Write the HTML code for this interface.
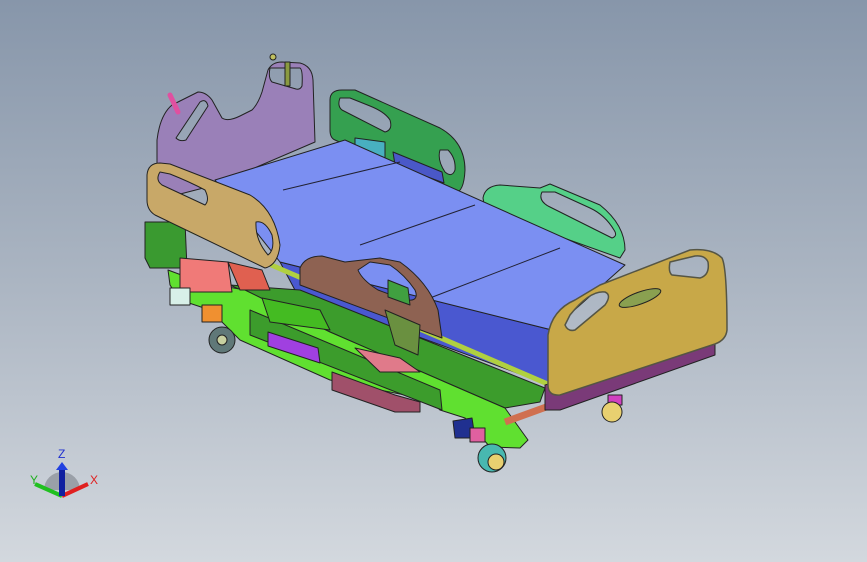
<!DOCTYPE html>
<html><head><meta charset="utf-8"><style>
html,body{margin:0;padding:0;width:867px;height:562px;overflow:hidden}
svg{display:block}
</style></head><body>
<svg width="867" height="562" viewBox="0 0 867 562" xmlns="http://www.w3.org/2000/svg" stroke="#222" stroke-width="1" stroke-linejoin="round">
<defs><linearGradient id="bg" x1="0" y1="0" x2="0" y2="1">
<stop offset="0" stop-color="#8796aa"/><stop offset="0.5" stop-color="#abb5c2"/><stop offset="1" stop-color="#d3d8de"/></linearGradient></defs>
<rect width="867" height="562" fill="url(#bg)" stroke="none"/>

<path fill-rule="evenodd" fill="#9a80b8" d="M157,200 L157,140 Q160,115 172,105 L198,92 Q206,92 212,100 L222,118 Q228,122 240,116 L252,110 Q258,104 262,92 L268,70 Q272,62 282,62 L300,63 Q312,66 313,80 L315,142 L215,185 Z
M176,138 L200,102 Q206,98 208,106 L186,140 Q180,142 176,138 Z
M270,68 L300,68 Q303,70 302,86 Q300,90 296,89 L272,82 Q268,78 270,68 Z"/>
<rect x="285" y="62" width="5" height="24" fill="#8a9a40"/>
<circle cx="273" cy="57" r="3" fill="#c0c060"/>
<line x1="170" y1="95" x2="178" y2="112" stroke="#e050a0" stroke-width="5" stroke-linecap="round"/>
<path fill-rule="evenodd" fill="#35a050" d="M330,100 Q330,90 342,90 L355,90 L440,128 Q465,142 465,170 Q464,192 455,193 L335,140 Q330,138 330,130 Z
M340,98 Q337,106 342,110 L385,132 Q393,130 390,120 Q385,112 370,106 L350,98 Z
M440,150 Q437,160 445,172 Q452,178 455,170 Q456,158 448,150 Z"/>
<polygon points="355,138 385,142 385,158 355,150" fill="#48b0c0"/>
<polygon points="393,152 442,172 444,183 395,165" fill="#4a58c8"/>
<path fill-rule="evenodd" fill="#55d088" d="M483,198 Q485,186 500,185 L540,188 L550,184 L600,205 Q625,225 625,250 L620,258 L485,210 Z
M542,192 Q538,200 548,206 L612,238 Q618,236 614,230 Q605,215 590,208 L555,192 Z"/>
<polygon points="280,262 552,330 550,385 296,292" fill="#4a58d0"/>
<polygon points="215,180 345,140 625,265 552,330 280,262" fill="#7b8ff2"/>
<line x1="283" y1="190" x2="400" y2="162" stroke="#223"/>
<line x1="360" y1="245" x2="475" y2="205" stroke="#223"/>
<line x1="430" y1="298" x2="560" y2="248" stroke="#223"/>
<polygon points="230,285 300,290 545,388 540,402 505,408 445,382 330,332" fill="#3c9c2c"/>
<line x1="190" y1="230" x2="550" y2="385" stroke="#b0d040" stroke-width="5"/>
<polygon points="145,222 185,222 187,268 150,268 145,258" fill="#3a9a30"/>
<polygon points="168,270 200,282 245,290 330,332 445,382 505,408 528,440 520,448 490,447 465,418 440,410 430,400 330,380 240,340 210,310 180,300 170,285" fill="#60e030"/>
<polygon points="250,310 440,390 442,410 250,335" fill="#3c9c2c"/>
<polygon points="262,298 320,310 330,330 270,322" fill="#44bb22"/>
<polygon points="268,332 318,348 320,363 268,346" fill="#a040e0"/>
<polygon points="332,372 395,395 420,402 420,412 395,412 332,390" fill="#a0506a"/>
<polygon points="355,348 400,358 420,372 380,372" fill="#e07a8a"/>
<polygon points="180,258 228,262 232,292 180,292" fill="#f07a78"/>
<polygon points="228,262 262,270 270,290 240,290" fill="#e06050"/>
<polygon points="170,288 190,288 190,305 170,305" fill="#d8f0e8"/>
<polygon points="202,305 222,305 222,322 202,322" fill="#f09030"/>
<polygon points="453,421 472,418 475,438 455,438" fill="#203090"/>
<polygon points="470,428 485,428 485,442 470,442" fill="#e060a0"/>
<line x1="505" y1="422" x2="560" y2="402" stroke="#d07050" stroke-width="7"/>
<path fill-rule="evenodd" fill="#c8a868" d="M147,175 Q148,163 160,163 L170,164 L250,195 Q275,210 280,245 Q278,265 265,268 L155,215 Q147,210 147,200 Z
M160,172 Q155,180 162,185 L205,205 Q210,200 205,190 Q190,182 170,174 Z
M256,222 Q255,240 268,255 Q275,250 272,235 Q265,220 256,222 Z"/>
<path fill-rule="evenodd" fill="#8e6252" d="M300,268 Q305,256 322,256 L345,262 L380,258 L400,262 Q428,282 438,310 L442,338 L300,285 Z
M358,270 Q362,280 378,290 L405,300 Q420,302 415,290 Q405,275 390,265 L370,262 Z"/>
<polygon points="388,280 408,288 410,305 388,297" fill="#40a040"/>
<polygon points="385,310 420,325 418,355 395,345" fill="#6a9040"/>
<polygon points="545,385 715,338 715,355 560,410 545,410" fill="#7a3a78"/>
<path fill-rule="evenodd" fill="#c8a848" stroke="#554" stroke-width="1.5" d="M548,335 Q552,310 575,300 L600,285 L690,250 Q712,248 722,258 Q727,268 727,330 Q726,340 715,344 L560,395 Q548,396 548,385 Z
M565,325 Q568,332 575,330 L605,305 Q612,295 605,292 Q590,290 570,315 Z
M670,262 Q668,272 672,275 L700,278 Q710,275 708,262 Q705,255 695,256 Z"/>
<ellipse cx="640" cy="298" rx="22" ry="6" transform="rotate(-20 640 298)" fill="#8aa050"/>
<circle cx="222" cy="340" r="13" fill="#607878"/><circle cx="222" cy="340" r="5" fill="#c8d0a0"/>
<circle cx="492" cy="458" r="14" fill="#48b8b0"/><circle cx="496" cy="462" r="8" fill="#e8d070"/>
<rect x="608" y="395" width="14" height="10" fill="#d040c0"/>
<circle cx="612" cy="412" r="10" fill="#e8d070"/>
<g stroke="none">
<path d="M44,490 A18,18 0 0 1 80,490 Z" fill="#9aa0a8"/>
<line x1="62" y1="496" x2="35" y2="484" stroke="#20c020" stroke-width="4"/>
<line x1="62" y1="496" x2="88" y2="484" stroke="#e02020" stroke-width="4"/>
<rect x="59" y="468" width="6" height="28" fill="#1020a0"/>
<polygon points="56,470 62,462 68,470" fill="#2040e0"/>
<text x="58" y="458" font-family="Liberation Sans,sans-serif" font-size="12" fill="#2030d0">Z</text>
<text x="30" y="484" font-family="Liberation Sans,sans-serif" font-size="12" fill="#20b020">Y</text>
<text x="90" y="484" font-family="Liberation Sans,sans-serif" font-size="12" fill="#e02020">X</text>
</g>
</svg>
</body></html>
